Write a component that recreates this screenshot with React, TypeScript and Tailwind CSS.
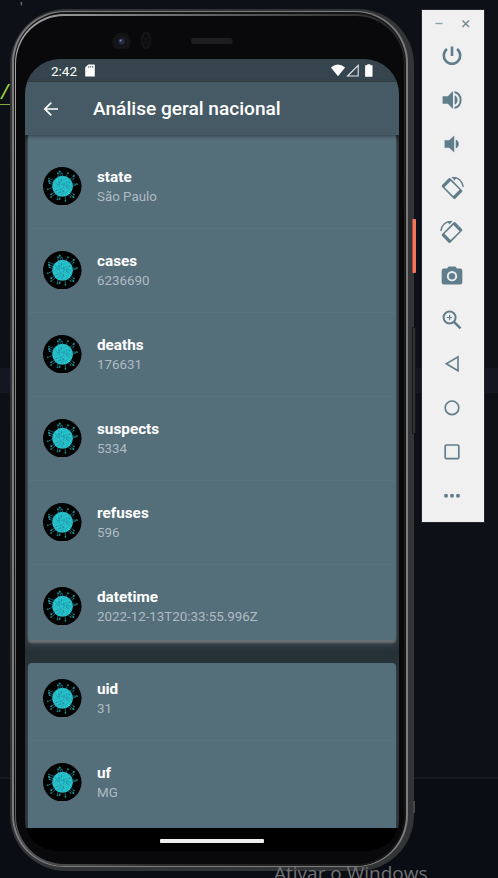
import React from "react";

const ROBOTO = "font-['Roboto','Liberation_Sans',sans-serif]";

const SPIKES = Array.from({ length: 20 }, (_, i) => {
  const a = (i / 20) * Math.PI * 2 + ((i * 7) % 4) * 0.07;
  const r = 12.9 + ((i * 7) % 5) * 0.6;
  const bend = ((i * 5) % 3) * 0.1 - 0.1;
  return {
    x1: 19 + Math.cos(a) * 9.5,
    y1: 19 + Math.sin(a) * 9.5,
    x2: 19 + Math.cos(a + bend) * r,
    y2: 19 + Math.sin(a + bend) * r,
  };
});

const SPECKS = Array.from({ length: 130 }, (_, i) => {
  const a = i * 2.39996 + ((i * 31) % 7) * 0.12;
  const r = Math.sqrt(i / 130) * 9.4;
  return {
    x: 19 + Math.cos(a) * r + ((i * 13) % 5) * 0.15,
    y: 18.7 + Math.sin(a) * r + ((i * 7) % 5) * 0.15,
    s: 0.3 + ((i * 11) % 4) * 0.12,
    dark: (i * 17) % 7 < 3 && r < 7.8,
  };
});

function Virus() {
  return (
    <svg viewBox="0 0 38 38" className="h-[38.5px] w-[38.5px] shrink-0">
      <circle cx="19" cy="19" r="19" fill="#000" />
      {SPIKES.map((s, i) => (
        <g key={i}>
          <line x1={s.x1} y1={s.y1} x2={s.x2} y2={s.y2} stroke="#14747f" strokeWidth="0.8" />
          <circle cx={s.x2} cy={s.y2} r={0.7 + (i % 3) * 0.18} fill="#1c8d98" />
        </g>
      ))}
      <circle cx="19.3" cy="19" r="10.3" fill="#25b8c4" />
      {SPECKS.map((s, i) => (
        <circle key={i} cx={s.x} cy={s.y} r={s.s} fill={s.dark ? "#167f8c" : "#2fd2da"} />
      ))}
    </svg>
  );
}

function Row({ title, value, height, line }: { title: string; value: string; height: string; line?: boolean }) {
  return (
    <div className={`flex shrink-0 pt-[21.5px] pl-[15px] ${height} ${line ? "border-b border-[#59727e]" : ""}`}>
      <Virus />
      <div className="ml-[15.5px] pt-[1.5px]">
        <div className="text-[15.3px] leading-[18px] font-bold text-white">{title}</div>
        <div className="mt-[3px] text-[13.35px] leading-[16px] text-[#afbcc3]">{value}</div>
      </div>
    </div>
  );
}

const first = [
  ["state", "São Paulo"],
  ["cases", "6236690"],
  ["deaths", "176631"],
  ["suspects", "5334"],
  ["refuses", "596"],
];

function Screen() {
  return (
    <div className={`flex h-[792px] w-[374.5px] flex-col overflow-hidden rounded-t-[35px] rounded-b-[30px] bg-[#263238] ${ROBOTO}`}>
      <div className="flex h-[23px] shrink-0 items-center bg-[#36454d] pr-[26px] pl-[26.5px] text-white">
        <span className="mt-[1px] text-[13.5px] leading-[23px]">2:42</span>
        <svg className="ml-[8px] h-[13px] w-[10px]" viewBox="0 0 10 13">
          <path d="M3.3 .4H9.2Q9.8.4 9.8 1V12Q9.8 12.6 9.2 12.6H.8Q.2 12.6.2 12V3.5Z" fill="#fff" />
          <path d="M3.7 2v1.8M5.7 2v1.8M7.7 2v1.8" stroke="#36454d" strokeWidth=".8" />
        </svg>
        <svg className="ml-auto h-[13px] w-[43px]" viewBox="0 0 43 13">
          <path d="M.9 3.6Q7.9-2.4 15.1 3.6L8 12.3Z" fill="#fff" />
          <path d="M17.6 12L28.2 1.4V12Z" fill="none" stroke="#e5e8ea" strokeWidth="1.1" />
          <path d="M37.3.2h3v1.1h2.2V12.7h-7.4V1.3h2.2z" fill="#fff" />
        </svg>
      </div>
      <div className="z-10 flex h-[53px] shrink-0 items-center bg-[#455a64] pl-[18.5px] shadow-[0_1px_4px_rgba(0,0,0,0.45)]">
        <svg className="h-[16px] w-[16px]" viewBox="0 0 17 16" fill="none" stroke="#fff" strokeWidth="1.8">
          <path d="M16 8H2.2M8.8 1.2L2 8l6.8 6.8" />
        </svg>
        <h1 className="ml-[34px] text-[19.1px] leading-[24px] font-medium whitespace-nowrap text-white">Análise geral nacional</h1>
      </div>
      <main className="flex h-[693px] shrink-0 flex-col px-[3.5px]">
        <section className="shrink-0 rounded-b-[4px] bg-[#546e7a] pt-[10px] shadow-[0_3px_2px_-0.5px_#6c7073,0_5px_6px_1px_rgba(70,80,86,0.6)]">
          {first.map(([t, v]) => (
            <Row key={t} title={t} value={v} height="h-[84px]" line />
          ))}
          <Row title="datetime" value="2022-12-13T20:33:55.996Z" height="h-[75px]" />
        </section>
        <section className="mt-[23px] h-[165px] shrink-0 rounded-t-[4px] bg-[#546e7a] shadow-[0_4px_4px_rgba(90,98,102,0.6)]">
          <div className="-mt-[6px] flex flex-col">
            <Row title="uid" value="31" height="h-[84px]" line />
            <Row title="uf" value="MG" height="h-[84px]" />
          </div>
        </section>
      </main>
      <div className="z-10 flex h-[23px] shrink-0 items-center justify-center bg-black">
        <div className="mt-[3px] h-[4px] w-[104px] rounded-[1px] bg-[#eeecee]" />
      </div>
    </div>
  );
}

function Phone() {
  return (
    <div className="relative mt-[8.5px] ml-[9.5px] h-[862.5px] w-[404px] shrink-0">
      <div className="relative h-full w-full rounded-[56px] bg-[#333436] pt-[2px] pr-[6px] pb-[4px] pl-[2.5px]">
        <div className="h-full w-full rounded-[52px] bg-[#7c7c7e] p-[1.5px]">
          <div className="h-full w-full rounded-[51px] bg-[#151516] pt-[2px] pr-[1px] pl-[1px]">
            <div className="h-full w-full rounded-[49px] bg-linear-[105deg,#a8a8a8_0%,#77787a_20%,#2b2b2c_60%,#151516_100%] p-[1.5px]">
              <div className="h-full w-full rounded-[48px] bg-[#09080a] pl-[8.5px]">
                <div className="flex h-[43.5px] items-center">
                  <svg className="ml-[82px] h-[24px] w-[140px]" viewBox="0 0 140 24">
                    <circle cx="14.5" cy="17" r="9.5" fill="#131314" />
                    <circle cx="14.5" cy="17" r="6" fill="#111219" stroke="#1c1d20" />
                    <circle cx="14.5" cy="16.5" r="3.2" fill="#272a43" />
                    <circle cx="13.5" cy="15.5" r="1" fill="#858a9e" />
                    <rect x="34.5" y="7" width="9" height="16.5" rx="4.5" fill="#0d0d0e" stroke="#151516" />
                    <circle cx="39" cy="11" r="3" fill="none" stroke="#18181a" />
                    <circle cx="39" cy="20" r="3" fill="none" stroke="#18181a" />
                    <rect x="84" y="13" width="41.5" height="6" rx="2.5" fill="#1e1e20" />
                  </svg>
                </div>
                <Screen />
              </div>
            </div>
          </div>
        </div>
      </div>
      <div className="absolute top-[210px] left-[402.5px] h-[54px] w-[4px] rounded-[1px] border-l border-[#a94b37] bg-[#ef795e]" />
      <div className="absolute top-[318px] left-[402.5px] h-[107px] w-[4px] rounded-[1px] border border-[#171819] bg-[#303132]" />
      <div className="absolute top-[792px] left-[403px] h-[12px] w-[2px] bg-[#454648]" />
    </div>
  );
}

const line = { fill: "none", stroke: "#607d8b", strokeWidth: 2 };

function Rotate({ flip }: { flip?: boolean }) {
  return (
    <g transform={flip ? "translate(24 0) scale(-1 1)" : undefined}>
      <g transform="rotate(-45 12 12.5)">
        <rect x="6" y="3" width="12" height="19" rx="1.5" fill="#607d8b" />
        <rect x="7.6" y="6.2" width="8.8" height="12.6" fill="#f0f0f0" />
      </g>
      <path d="M12.5 1.6Q21.5 1.2 23.2 11" fill="none" stroke="#607d8b" strokeWidth="1.4" />
      <path d="M11.5 .8L16.8 1.4L14.4 4.6Z" fill="#607d8b" />
    </g>
  );
}

const ICONS = [
  <path d="M12 2.6V12M7 5A8.2 8.2 0 1 0 17 5" {...line} strokeWidth="2.6" />,
  <g>
    <path d="M2.6 8.2h5.2L13 3v18l-5.2-5.2H2.6zM14.6 7.3a5.2 5.2 0 0 1 0 9.4z" fill="#607d8b" />
    <path d="M14.5 4a8.3 8.3 0 0 1 0 16" {...line} />
  </g>,
  <path d="M4.6 8.2h4.6L14.2 3.4v17.2l-5-4.8H4.6zM15.7 7.4a5 5 0 0 1 0 9.2z" fill="#607d8b" />,
  <Rotate />,
  <Rotate flip />,
  <g>
    <path d="M8.7 2.4h6.6l1.8 2h3q2.2 0 2.2 2v12q0 2-2.2 2H3.9q-2.2 0-2.2-2v-12q0-2 2.2-2h3z" fill="#607d8b" />
    <circle cx="12" cy="12.2" r="4.2" fill="#607d8b" stroke="#f0f0f0" strokeWidth="1.9" />
  </g>,
  <g {...line}>
    <circle cx="9.6" cy="9.5" r="6" />
    <path d="M14 13.8l6.5 6.5" strokeWidth="2.5" />
    <path d="M9.6 6.8v5.4M6.9 9.5h5.4" strokeWidth="1.2" />
  </g>,
  <path d="M18 4.8v14L6.3 11.8z" {...line} strokeWidth="1.6" />,
  <circle cx="12" cy="11.8" r="6.8" {...line} strokeWidth="1.7" />,
  <rect x="5.2" y="5" width="13.6" height="13.6" rx="1.2" {...line} strokeWidth="1.7" />,
  <g fill="#607d8b">
    <circle cx="6" cy="11.8" r="2" />
    <circle cx="12" cy="11.8" r="2" />
    <circle cx="18" cy="11.8" r="2" />
  </g>,
];

function Toolbar() {
  return (
    <aside className="mt-[9px] ml-[7px] flex h-[514px] w-[64px] shrink-0 flex-col items-center border border-[#242629] bg-[#f0f0f0] pr-[1px]">
      <svg className="mt-[8px] mb-[9px] h-[12px] w-[40px] shrink-0" viewBox="0 0 40 12">
        <path d="M3.5 5.5h7" stroke="#8fa2ac" strokeWidth="1.4" />
        <path d="M30.5 2.5l6.5 6.5M37 2.5L30.5 9" stroke="#718b98" strokeWidth="1.5" />
      </svg>
      {ICONS.map((icon, i) => (
        <div key={i} className="flex h-[44px] w-full shrink-0 items-start justify-center pt-[5px]">
          <svg viewBox="0 0 24 24" className="h-[24px] w-[24px]">
            {icon}
          </svg>
        </div>
      ))}
    </aside>
  );
}

export default function App() {
  return (
    <div className="relative h-[878px] w-[498px] overflow-hidden bg-[#0d1017]">
      <div className="absolute top-[368px] left-0 h-[25px] w-full bg-[#121722]" />
      <div className="absolute top-[777px] left-0 h-[101px] w-full border-t-2 border-[#171b23] bg-[#0a0d14]" />
      <div className="absolute -top-[1px] left-[18px] font-['Liberation_Mono',monospace] text-[11px] leading-[16px] text-[#7e8996]">'</div>
      <div className="absolute top-[82px] left-0 h-[23px] w-[9.5px] border-b border-[#7fae36] font-['Liberation_Mono',monospace] text-[20px] leading-[23px] text-[#a3d83c]">
        <span className="-ml-[1px]">/</span>
      </div>
      <div className="relative flex items-start">
        <Phone />
        <Toolbar />
      </div>
      <div className="absolute top-[860px] left-[274px] font-['Open_Sans',sans-serif] text-[19px] leading-[26px] whitespace-nowrap text-[#717273]">
        Ativar o Windows
      </div>
    </div>
  );
}
